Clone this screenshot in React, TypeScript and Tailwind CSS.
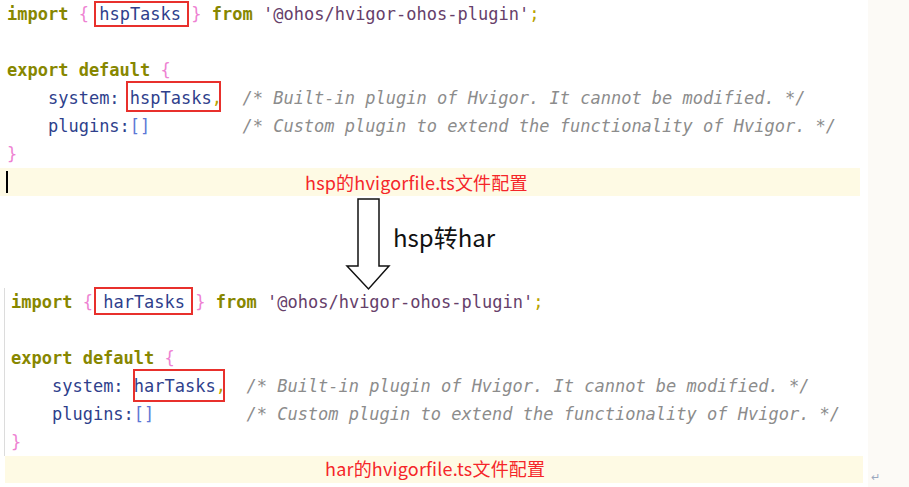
import React from 'react';

const mono = { fontFamily: '"DejaVu Sans Mono", "Liberation Mono", monospace' };

const K = ({ children }: { children: React.ReactNode }) => (
  <span className="font-bold text-[#878700]">{children}</span>
);
const Br = ({ children }: { children: React.ReactNode }) => (
  <span className="text-[#ee82d2]">{children}</span>
);
const Id = ({ children }: { children: React.ReactNode }) => (
  <span className="text-[#2f3f8c]">{children}</span>
);
const Str = ({ children }: { children: React.ReactNode }) => (
  <span className="text-[#66406a]">{children}</span>
);
const Punc = ({ children }: { children: React.ReactNode }) => (
  <span className="text-[#b9a300]">{children}</span>
);
const Cmt = ({ children }: { children: React.ReactNode }) => (
  <span className="italic text-[#8c8c8c]">{children}</span>
);

// red annotation box drawn over a token
const Boxed = ({ children, box }: { children: React.ReactNode; box: string }) => (
  <span className="relative inline-block">
    {children}
    <span className={box} />
  </span>
);

const Line = ({ children }: { children?: React.ReactNode }) => (
  <div className="h-[28px] leading-[28px] whitespace-pre text-[17px] text-[#2f3f8c]">{children}</div>
);

const CodeBlock = ({ task, boxA, boxB }: { task: string; boxA: string; boxB: string }) => (
  <>
    <Line>
      <K>import</K> <Br>{'{'}</Br> <Boxed box={boxA}><Id>{task} </Id></Boxed><Br>{'}'}</Br> <K>from</K>{' '}
      <Str>'@ohos/hvigor-ohos-plugin'</Str>
      <Punc>;</Punc>
    </Line>
    <Line />
    <Line>
      <K>export default</K> <Br>{'{'}</Br>
    </Line>
    <Line>
      {'    '}
      <Id>system: </Id>
      <Boxed box={boxB}>
        <Id>{task}</Id>
        <Punc>,</Punc>
      </Boxed>
      {'  '}
      <Cmt>/* Built-in plugin of Hvigor. It cannot be modified. */</Cmt>
    </Line>
    <Line>
      {'    '}
      <Id>plugins:</Id>
      <span className="text-[#5b78d6]">[]</span>
      {'         '}
      <Cmt>/* Custom plugin to extend the functionality of Hvigor. */</Cmt>
    </Line>
    <Line>
      <Br>{'}'}</Br>
    </Line>
  </>
);

const caption = { fontFamily: '"Noto Sans CJK SC", "Noto Sans", sans-serif' };

export default function App() {
  return (
    <div className="w-[909px] h-[487px] bg-white flex overflow-hidden">
      <div className="w-[868px] flex flex-col">
        {/* hsp file */}
        <div className="pl-[7px]" style={mono}>
          <CodeBlock
            task="hspTasks"
            boxA="absolute -left-[5px] top-[1px] w-[95px] h-[26px] border-2 border-[#e8302c]"
            boxB="absolute -left-[4px] -top-[3px] w-[95px] h-[31px] border-2 border-[#e8302c]"
          />
        </div>
        <div className="w-[860px] h-[28px] bg-[#fefae4] flex items-center">
          <div className="ml-[6px] w-[2px] h-[22px] bg-black" />
          <span className="ml-[297px] text-[18px] tracking-[0.2px] text-[#f5262a] leading-none" style={caption}>
            hsp的hvigorfile.ts文件配置
          </span>
        </div>

        {/* conversion arrow */}
        <div className="h-[92px] flex items-start">
          <svg width="44" height="94" viewBox="0 0 44 94" className="ml-[346px] overflow-visible">
            <path d="M12 3 H33 V70 H43 L22.5 93 L1 70 H12 Z" fill="white" stroke="#111" strokeWidth="1.5" strokeLinejoin="miter" />
          </svg>
          <span className="ml-[3px] mt-[27px] leading-[28px] text-[24px] text-[#111]" style={caption}>
            hsp转har
          </span>
        </div>

        {/* har file */}
        <div className="ml-[4px] border-l border-[#dcdcdc] pl-[6px]" style={mono}>
          <CodeBlock
            task="harTasks"
            boxA="absolute -left-[9px] -top-[1px] w-[99px] h-[28px] border-2 border-[#e8302c]"
            boxB="absolute -left-[1px] -top-[3px] w-[92px] h-[33px] border-2 border-[#e8302c]"
          />
        </div>
        <div className="ml-[5px] w-[858px] h-[27px] bg-[#fefae4] flex items-start">
          <span className="ml-[320px] mt-[1px] text-[18px] tracking-[0.2px] text-[#f5262a] leading-[22px]" style={caption}>
            har的hvigorfile.ts文件配置
          </span>
        </div>
      </div>
      <div className="flex-1 bg-[#fcfaf6] relative">
        <span className="absolute left-[3px] top-[468px] text-[11px] text-[#9aa8c0]" style={caption}>↵</span>
      </div>
    </div>
  );
}
